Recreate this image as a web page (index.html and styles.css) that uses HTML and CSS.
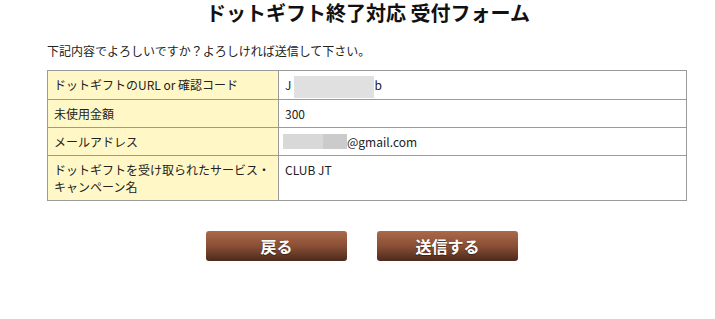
FILE: index.html
```html
<!DOCTYPE html>
<html lang="ja">
<head>
    <meta charset="UTF-8">
    <title>ドットギフト終了対応 受付フォーム</title>
    <link rel="stylesheet" href="styles.css">
</head>
<body>
    <div class="page">
        <h1>ドットギフト終了対応 受付フォーム</h1>
        <p class="lead">下記内容でよろしいですか？よろしければ送信して下さい。</p>

        <table class="confirm-table">
            <tr>
                <th>ドットギフトのURL or 確認コード</th>
                <td>J<span class="mask mask-code"></span>b</td>
            </tr>
            <tr>
                <th>未使用金額</th>
                <td>300</td>
            </tr>
            <tr>
                <th>メールアドレス</th>
                <td><span class="mask mask-mail"><span class="mask-dark"></span></span>@gmail.com</td>
            </tr>
            <tr>
                <th>ドットギフトを受け取られたサービス・キャンペーン名</th>
                <td>CLUB JT</td>
            </tr>
        </table>

        <div class="actions">
            <button type="button" class="btn">戻る</button>
            <button type="button" class="btn">送信する</button>
        </div>
    </div>
</body>
</html>
```

FILE: styles.css
```css
* {
    margin: 0;
    padding: 0;
    box-sizing: border-box;
}

body {
    font-family: "Noto Sans CJK JP", "Noto Sans", sans-serif;
    background: #fff;
    color: #222;
    font-size: 12px;
}

.page {
    width: 640px;
    margin-left: 47px;
}

h1 {
    font-size: 20px;
    font-weight: bold;
    text-align: center;
    line-height: 24px;
    padding-top: 1px;
    color: #111;
    margin-left: 2px;
}

.lead {
    margin-top: 18px;
    line-height: 16px;
}

/* confirm table */
.confirm-table {
    width: 640px;
    margin-top: 11px;
    border-collapse: collapse;
}

.confirm-table th,
.confirm-table td {
    border: 1px solid #9a9a9a;
    text-align: left;
    vertical-align: top;
    font-weight: normal;
    line-height: 17px;
    padding: 5px 6px;
}

.confirm-table th {
    width: 231px;
    background: #fff8c6;
}

.mask {
    display: inline-block;
    vertical-align: middle;
    background: #e0e0e0;
    margin-top: -4px;
}

.mask-code {
    width: 80px;
    height: 22px;
    margin-left: 3px;
    margin-bottom: -4px;
}

.mask-mail {
    width: 64px;
    height: 15px;
    margin-left: -2px;
    background: #d8d8d8;
    position: relative;
}

.mask-dark {
    position: absolute;
    right: 0;
    top: 0;
    width: 24px;
    height: 15px;
    background: #cbcbcb;
}

/* buttons */
.actions {
    display: flex;
    justify-content: center;
    gap: 30px;
    margin-top: 30px;
    margin-right: 10px;
}

.btn {
    width: 141px;
    height: 30px;
    border: none;
    border-radius: 3px;
    background: linear-gradient(to bottom, #ab694b 0%, #8a4f36 50%, #4b2a1d 100%);
    color: #fff;
    font-family: inherit;
    font-size: 16px;
    font-weight: bold;
    text-shadow: 0 1px 1px rgba(0, 0, 0, 0.4);
    cursor: pointer;
}
```
